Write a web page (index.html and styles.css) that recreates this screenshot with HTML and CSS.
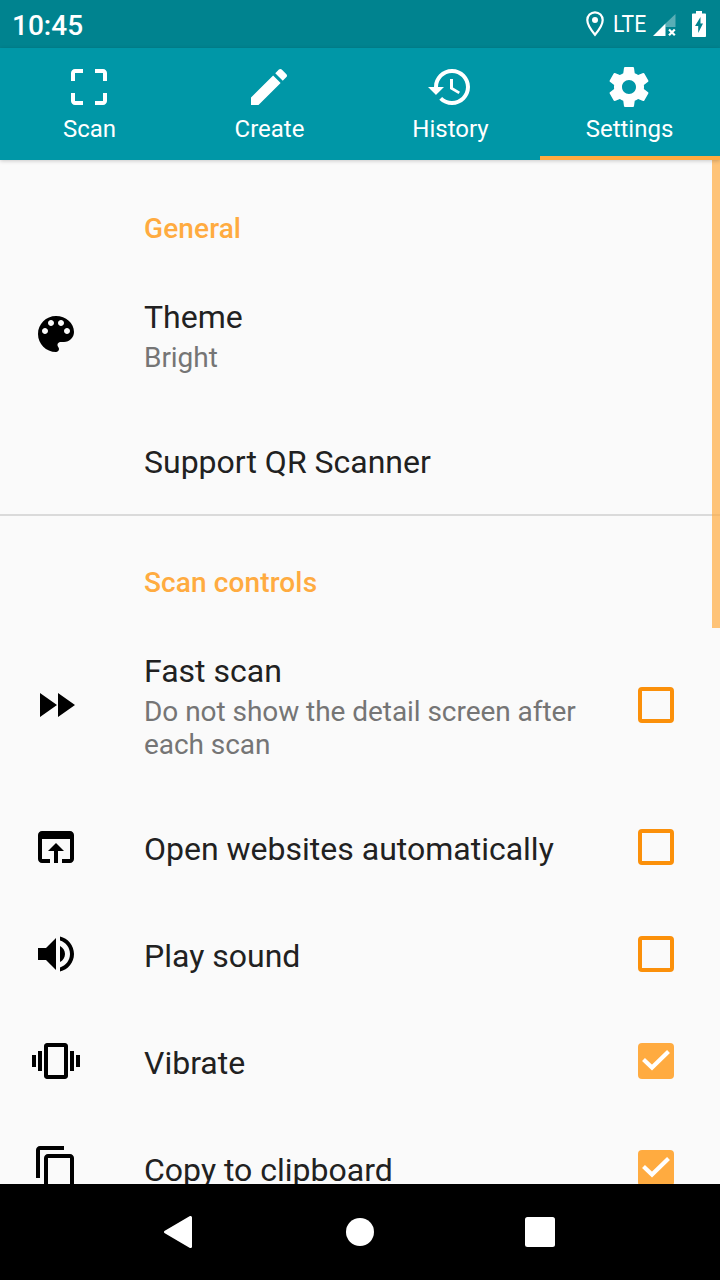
FILE: index.html
```html
<!DOCTYPE html>
<html lang="en">
<head>
    <meta charset="UTF-8">
    <meta name="viewport" content="width=device-width, initial-scale=1.0">
    <title>QR Scanner - Settings</title>
    <link rel="stylesheet" href="styles.css">
</head>
<body>
    <div class="screen">
        <header class="status-bar">
            <span class="clock">10:45</span>
            <div class="status-icons">
                <svg class="location" viewBox="0 0 18 26">
                    <path d="M9 1.3C4.7 1.3 1.3 4.700 1.3 9c0 5.600 7.700 14.700 7.700 14.700S16.700 14.600 16.700 9C16.700 4.700 13.300 1.300 9 1.300z" fill="none" stroke="#fff" stroke-width="2.200"/>
                    <circle cx="9" cy="9" r="3" fill="#fff"/>
                </svg>
                <span class="network">LTE</span>
                <svg class="signal" viewBox="0 0 24 24">
                    <path d="M12.500 9.500L22.500 0v13H12.500z" fill="#fff" opacity="0.350"/>
                    <path d="M12.500 9.500V22H0z" fill="#fff"/>
                    <path d="M16 15.500l5.800 5.800m0-5.800l-5.800 5.800" stroke="#fff" stroke-width="2.200"/>
                </svg>
                <svg class="battery" viewBox="0 0 14 26">
                    <path d="M4 0h6v2.500h3c.6 0 1 .4 1 1V25c0 .6-.4 1-1 1H1c-.6 0-1-.4-1-1V3.500c0-.6.4-1 1-1h3z" fill="#fff"/>
                    <path d="M8.500 6L3 15h3.200v7L11 12.500H8.500z" fill="#00838f"/>
                </svg>
            </div>
        </header>

        <nav class="tabs">
            <a class="tab">
                <svg class="icon" viewBox="0 0 24 24"><path d="M3 5v4h2V5h4V3H5c-1.100 0-2 .9-2 2zm2 10H3v4c0 1.100.9 2 2 2h4v-2H5v-4zm14 4h-4v2h4c1.100 0 2-.9 2-2v-4h-2v4zm0-16h-4v2h4v4h2V5c0-1.100-.9-2-2-2z"/></svg>
                <span>Scan</span>
            </a>
            <a class="tab">
                <svg class="icon" viewBox="0 0 24 24"><path d="M3 17.250V21h3.750L17.810 9.940l-3.750-3.750L3 17.250zM20.710 7.040c.39-.39.39-1.020 0-1.410l-2.340-2.340c-.39-.39-1.020-.39-1.410 0l-1.830 1.830 3.750 3.750 1.830-1.830z"/></svg>
                <span>Create</span>
            </a>
            <a class="tab history">
                <svg class="icon" viewBox="0 0 24 24"><path d="M13 3c-4.970 0-9 4.030-9 9H1l3.890 3.890.07.14L9 12H6c0-3.870 3.130-7 7-7s7 3.130 7 7-3.130 7-7 7c-1.930 0-3.680-.79-4.940-2.060l-1.420 1.420C8.270 19.990 10.510 21 13 21c4.970 0 9-4.030 9-9s-4.030-9-9-9zm-1 5v5l4.280 2.540.72-1.210-3.500-2.080V8H12z"/></svg>
                <span>History</span>
            </a>
            <a class="tab active">
                <svg class="icon" viewBox="0 0 24 24"><path d="M19.430 12.980c.04-.32.07-.64.07-.98s-.03-.66-.07-.98l2.110-1.650c.19-.15.24-.42.12-.64l-2-3.460c-.12-.22-.39-.3-.61-.22l-2.490 1c-.52-.4-1.080-.73-1.690-.98l-.38-2.650C14.460 2.180 14.250 2 14 2h-4c-.25 0-.46.18-.49.42l-.38 2.650c-.61.25-1.170.59-1.690.98l-2.490-1c-.23-.09-.49 0-.61.22l-2 3.460c-.13.22-.07.49.12.64l2.110 1.650c-.04.32-.07.65-.07.98s.03.66.07.98l-2.110 1.650c-.19.15-.24.42-.12.64l2 3.460c.12.22.39.3.61.22l2.490-1c.52.4 1.080.73 1.690.98l.38 2.650c.03.24.24.42.49.42h4c.25 0 .46-.18.49-.42l.38-2.650c.61-.25 1.170-.59 1.690-.98l2.490 1c.23.09.49 0 .61-.22l2-3.460c.12-.22.07-.49-.12-.64l-2.110-1.650zM12 15.500c-1.930 0-3.500-1.570-3.500-3.500s1.570-3.500 3.500-3.500 3.500 1.570 3.500 3.500-1.570 3.500-3.500 3.500z"/></svg>
                <span>Settings</span>
            </a>
        </nav>

        <main class="content">
            <h2 class="section-title">General</h2>
            <div class="row tall">
                <svg class="icon" viewBox="0 0 24 24"><path d="M12 3c-4.970 0-9 4.030-9 9s4.030 9 9 9c.83 0 1.500-.67 1.500-1.500 0-.39-.15-.74-.39-1.010-.23-.26-.38-.61-.38-.99 0-.83.67-1.500 1.500-1.500H16c2.760 0 5-2.240 5-5 0-4.420-4.030-8-9-8zm-5.500 9c-.83 0-1.500-.67-1.500-1.500S5.670 9 6.500 9 8 9.670 8 10.500 7.330 12 6.500 12zm3-4C8.670 8 8 7.330 8 6.500S8.670 5 9.500 5s1.500.67 1.500 1.500S10.330 8 9.500 8zm5 0c-.83 0-1.500-.67-1.500-1.500S13.670 5 14.500 5s1.500.67 1.500 1.500S15.330 8 14.500 8zm3 4c-.83 0-1.500-.67-1.500-1.500S16.670 9 17.500 9s1.500.67 1.500 1.500-.67 1.500-1.500 1.500z"/></svg>
                <div class="text">
                    <p class="title">Theme</p>
                    <p class="summary">Bright</p>
                </div>
            </div>
            <div class="row">
                <div class="text"><p class="title">Support QR Scanner</p></div>
            </div>

            <h2 class="section-title divided">Scan controls</h2>
            <div class="row tall long">
                <svg class="icon" viewBox="0 0 24 24"><path d="M4 18l8.500-6L4 6v12zm9-12v12l8.500-6L13 6z"/></svg>
                <div class="text">
                    <p class="title">Fast scan</p>
                    <p class="summary">Do not show the detail screen after each scan</p>
                </div>
                <span class="checkbox"></span>
            </div>
            <div class="row">
                <svg class="icon" viewBox="0 0 24 24"><path d="M19 4H5c-1.110 0-2 .9-2 2v12c0 1.100.89 2 2 2h4v-2H5V8h14v10h-4v2h4c1.100 0 2-.9 2-2V6c0-1.100-.89-2-2-2zm-7 6l-4 4h3v6h2v-6h3l-4-4z"/></svg>
                <div class="text"><p class="title">Open websites automatically</p></div>
                <span class="checkbox"></span>
            </div>
            <div class="row">
                <svg class="icon" viewBox="0 0 24 24"><path d="M3 9v6h4l5 5V4L7 9H3zm13.500 3c0-1.770-1.020-3.290-2.500-4.030v8.050c1.480-.73 2.500-2.250 2.500-4.020zM14 3.230v2.060c2.890.86 5 3.540 5 6.710s-2.110 5.850-5 6.710v2.060c4.010-.91 7-4.490 7-8.770s-2.990-7.860-7-8.770z"/></svg>
                <div class="text"><p class="title">Play sound</p></div>
                <span class="checkbox"></span>
            </div>
            <div class="row">
                <svg class="icon" viewBox="0 0 24 24"><path d="M0 15h2V9H0v6zm3 2h2V7H3v10zm19-8v6h2V9h-2zm-3 8h2V7h-2v10zM16.500 3h-9C6.670 3 6 3.670 6 4.500v15c0 .83.67 1.500 1.500 1.500h9c.83 0 1.500-.67 1.500-1.500v-15c0-.83-.67-1.500-1.500-1.500zM16 19H8V5h8v14z"/></svg>
                <div class="text"><p class="title">Vibrate</p></div>
                <span class="checkbox checked">
                    <svg viewBox="0 0 36 36"><path d="M5.500 16.500l8.500 8L30.500 8.500"/></svg>
                </span>
            </div>
            <div class="row">
                <svg class="icon" viewBox="0 0 24 24"><path d="M16 1H4c-1.100 0-2 .9-2 2v14h2V3h12V1zm3 4H8c-1.100 0-2 .9-2 2v14c0 1.100.9 2 2 2h11c1.100 0 2-.9 2-2V7c0-1.100-.9-2-2-2zm0 16H8V7h11v14z"/></svg>
                <div class="text"><p class="title">Copy to clipboard</p></div>
                <span class="checkbox checked">
                    <svg viewBox="0 0 36 36"><path d="M5.500 16.500l8.500 8L30.500 8.500"/></svg>
                </span>
            </div>
            <div class="scrollbar"></div>
        </main>

        <footer class="nav-bar">
            <svg viewBox="0 0 48 48"><path d="M8.800 22.700L33.500 8.200c1.200-.7 2.500 0 2.500 1.300v29c0 1.300-1.300 2-2.500 1.300L8.800 25.300c-1.100-.7-1.100-1.900 0-2.600z"/></svg>
            <svg viewBox="0 0 48 48"><circle cx="24" cy="24" r="14"/></svg>
            <svg viewBox="0 0 48 48"><rect x="9" y="9" width="30" height="30" rx="2.500"/></svg>
        </footer>
    </div>
</body>
</html>
```
FILE: styles.css
```css
* {
    box-sizing: border-box;
}
body {
    margin: 0;
    font-family: Roboto, sans-serif;
    background-color: #fafafa;
}
.screen {
    display: flex;
    flex-direction: column;
    width: 720px;
    height: 1280px;
    overflow: hidden;
}
.status-bar {
    display: flex;
    justify-content: space-between;
    height: 48px;
    padding: 0 14px 0 12px;
    background-color: #00838f;
    color: #fff;
}
.clock {
    font-size: 28px;
    font-weight: 500;
    line-height: 52px;
}
.status-icons {
    display: flex;
    align-items: center;
}
.location {
    width: 18px;
    height: 26px;
    margin-right: 9px;
}
.network {
    width: 40px;
    font-size: 24px;
    line-height: 48px;
    transform: scaleX(0.88);
    transform-origin: left;
}
.signal {
    width: 24px;
    height: 24px;
    margin: 3px 15px 0 0;
}
.battery {
    width: 14px;
    height: 26px;
}
.tabs {
    display: flex;
    height: 112px;
    background-color: #0097a7;
    box-shadow: 0 1px 4px rgba(0, 0, 0, 0.2);
    z-index: 1;
}
.tab {
    display: flex;
    flex-direction: column;
    align-items: center;
    width: 180px;
    padding: 15px 2px 0 0;
    color: #fff;
    font-size: 24px;
    line-height: 28px;
    border-bottom: 4px solid transparent;
}
.tab span {
    margin: 4px 0 0 1px;
}
.tab.history {
    padding-right: 0;
}
.tab.active {
    border-bottom-color: #ffab40;
}
.icon {
    width: 48px;
    height: 48px;
    flex-shrink: 0;
    fill: currentColor;
}
.content {
    position: relative;
    flex: 1;
    min-height: 0;
    overflow: hidden;
}
.section-title {
    height: 100px;
    margin: 0;
    padding: 52px 0 0 144px;
    color: #ffab40;
    font-size: 28px;
    font-weight: 500;
    line-height: 33px;
    letter-spacing: 0.12px;
}
.section-title.divided {
    margin-top: -1px;
    border-top: 2px solid #dadada;
    padding-top: 50px;
}
.row {
    display: flex;
    align-items: center;
    height: 107px;
    padding: 0 46px 1px 32px;
    color: #000;
}
.text {
    flex: 1;
    margin-left: 64px;
    padding-top: 4px;
}
.text:first-child {
    margin-left: 112px;
    padding-top: 3px;
}
.title {
    margin: 0;
    color: #212121;
    font-size: 32px;
    line-height: 43px;
}
.row.tall {
    height: auto;
    padding-top: 34px;
    padding-bottom: 34px;
}
.row.long {
    padding-bottom: 33px;
}
.row.tall .text {
    padding-top: 0;
}
.row.tall .title {
    line-height: 46px;
    margin-bottom: 1px;
}
.summary {
    margin: 0;
    max-width: 450px;
    color: #757575;
    font-size: 28px;
    line-height: 33px;
    letter-spacing: -0.05px;
}
.checkbox {
    width: 36px;
    height: 36px;
    border: 4px solid #fb900a;
    border-radius: 4px;
}
.checkbox.checked {
    border: none;
    background-color: #ffab40;
}
.checkbox svg {
    display: block;
    fill: none;
    stroke: #fff;
    stroke-width: 4.2;
}
.scrollbar {
    position: absolute;
    top: 0;
    right: 0;
    width: 8px;
    height: 468px;
    background-color: rgba(255, 171, 64, 0.7);
}
.nav-bar {
    display: flex;
    justify-content: center;
    align-items: center;
    gap: 132px;
    height: 96px;
    background-color: #000;
}
.nav-bar svg {
    width: 48px;
    height: 48px;
    fill: #fff;
}
```
